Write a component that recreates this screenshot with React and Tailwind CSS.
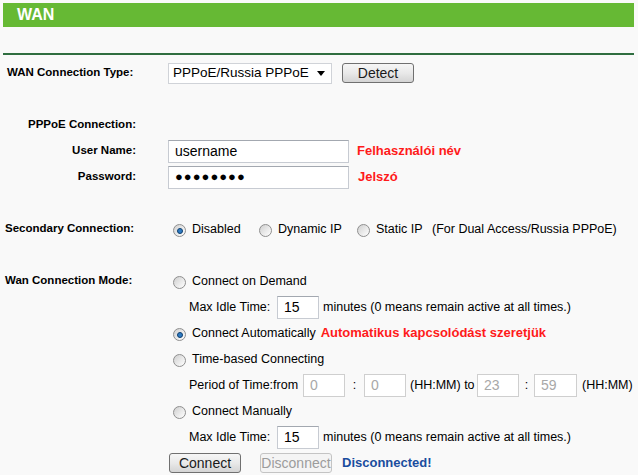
import React from "react";

const F = { fontFamily: '"Liberation Sans", Arial, sans-serif' };

function Radio({ checked }) {
  return (
    <span className="relative mt-[3px] inline-flex h-[13px] w-[13px] shrink-0 items-center justify-center rounded-full border border-[#8f8f8f] bg-linear-to-br from-[#cfcfcf] via-[#e8e8e8] to-[#ffffff]">
      {checked && (
        <span className="h-[6px] w-[6px] rounded-full border border-[#0f3f6e] bg-[#2f7cc4]" />
      )}
    </span>
  );
}

function Input({ w, value, disabled, pw }) {
  return (
    <div
      className={`flex h-[23px] items-center border bg-white pl-[6px] text-[14px] ${
        disabled
          ? "border-[#cfcfcf] text-[#a8a8a8]"
          : "border-[#c7cbd2] border-t-[#a3a8b0] text-black"
      } ${w}`}
    >
      {pw ? <span className="tracking-[1px] text-[13px]">●●●●●●●●</span> : value}
    </div>
  );
}

function Btn({ children, disabled, w }) {
  return (
    <div
      className={`flex h-[20px] items-center justify-center rounded-[3px] border text-[14px] ${w} ${
        disabled
          ? "border-[#c4c4c4] bg-[#f4f4f4] text-[#9c9c9c]"
          : "border-[#707070] bg-linear-to-b from-[#f6f6f6] via-[#e9e9e9] to-[#d4d4d4] text-[#1a1a1a]"
      }`}
    >
      {children}
    </div>
  );
}

function Row({ children }) {
  return <div className="flex h-[26px] items-center">{children}</div>;
}

export default function App() {
  return (
    <div className="min-h-[475px] w-[638px] bg-[#f9f9f9] pt-[3px] text-[12.5px] text-black" style={F}>
      <div className="ml-[3px] mr-[4px] flex h-[24px] items-center bg-[#66b934] pl-[14px] text-[16px] font-bold text-white">
        WAN
      </div>
      <div className="ml-[3px] mr-[4px] mt-[26px] h-[2px] bg-[#2f6e40]" />
      <div className="mt-[5px]">
        <Row>
          <div className="w-[168px] pl-[7px] text-[11.5px] font-bold">WAN Connection Type:</div>
          <div className="flex h-[21px] w-[164px] items-center justify-between border border-[#d0d3d8] bg-white pl-[4px] pr-[6px] text-[13.5px]">
            <span>PPPoE/Russia PPPoE</span>
            <svg width="8" height="5" viewBox="0 0 8 5">
              <path d="M0 0h8L4 5z" fill="#000" />
            </svg>
          </div>
          <div className="ml-[10px]">
            <Btn w="w-[72px]">Detect</Btn>
          </div>
        </Row>
        <Row />
        <Row>
          <div className="w-[136px] text-right text-[11.5px] font-bold">PPPoE Connection:</div>
        </Row>
        <Row>
          <div className="w-[168px]">
            <div className="w-[136px] text-right text-[11.5px] font-bold">User Name:</div>
          </div>
          <Input w="w-[181px]" value="username" />
          <span className="ml-[8px] text-[13px] font-bold text-[#ff1a1a]">Felhasználói név</span>
        </Row>
        <Row>
          <div className="w-[168px]">
            <div className="w-[136px] text-right text-[11.5px] font-bold">Password:</div>
          </div>
          <Input w="w-[181px]" pw />
          <span className="ml-[9px] text-[13px] font-bold text-[#ff1a1a]">Jelszó</span>
        </Row>
        <Row />
        <Row>
          <div className="w-[173px] pl-[5px] text-[11.5px] font-bold">Secondary Connection:</div>
          <Radio checked />
          <span className="ml-[6px] w-[67px]">Disabled</span>
          <Radio />
          <span className="ml-[6px] w-[79px]">Dynamic IP</span>
          <Radio />
          <span className="ml-[6px] w-[56px]">Static IP</span>
          <span>(For Dual Access/Russia PPPoE)</span>
        </Row>
        <Row />
        <Row>
          <div className="w-[173px] pl-[5px] text-[11.5px] font-bold">Wan Connection Mode:</div>
          <Radio />
          <span className="ml-[6px]">Connect on Demand</span>
        </Row>
        <Row>
          <div className="w-[189px]" />
          <span className="w-[88px]">Max Idle Time:</span>
          <Input w="w-[42px]" value="15" />
          <span className="ml-[4px]">minutes (0 means remain active at all times.)</span>
        </Row>
        <Row>
          <div className="w-[173px]" />
          <Radio checked />
          <span className="ml-[6px]">Connect Automatically</span>
          <span className="ml-[5px] text-[13px] font-bold text-[#ff1a1a]">Automatikus kapcsolódást szeretjük</span>
        </Row>
        <Row>
          <div className="w-[173px]" />
          <Radio />
          <span className="ml-[6px]">Time-based Connecting</span>
        </Row>
        <Row>
          <div className="w-[189px]" />
          <span className="w-[114px]">Period of Time:from</span>
          <Input w="w-[42px]" value="0" disabled />
          <span className="w-[19px] text-center">:</span>
          <Input w="w-[42px]" value="0" disabled />
          <span className="ml-[4px] w-[67px]">(HH:MM) to</span>
          <Input w="w-[42px]" value="23" disabled />
          <span className="w-[15px] text-center">:</span>
          <Input w="w-[43px]" value="59" disabled />
          <span className="ml-[5px]">(HH:MM)</span>
        </Row>
        <Row>
          <div className="w-[173px]" />
          <Radio />
          <span className="ml-[6px]">Connect Manually</span>
        </Row>
        <Row>
          <div className="w-[189px]" />
          <span className="w-[88px]">Max Idle Time:</span>
          <Input w="w-[42px]" value="15" />
          <span className="ml-[4px]">minutes (0 means remain active at all times.)</span>
        </Row>
        <Row>
          <div className="w-[169px]" />
          <Btn w="w-[72px]">Connect</Btn>
          <div className="ml-[19px]">
            <Btn w="w-[72px]" disabled>Disconnect</Btn>
          </div>
          <span className="ml-[10px] text-[13px] font-bold text-[#1a4d9e]">Disconnected!</span>
        </Row>
      </div>
    </div>
  );
}
